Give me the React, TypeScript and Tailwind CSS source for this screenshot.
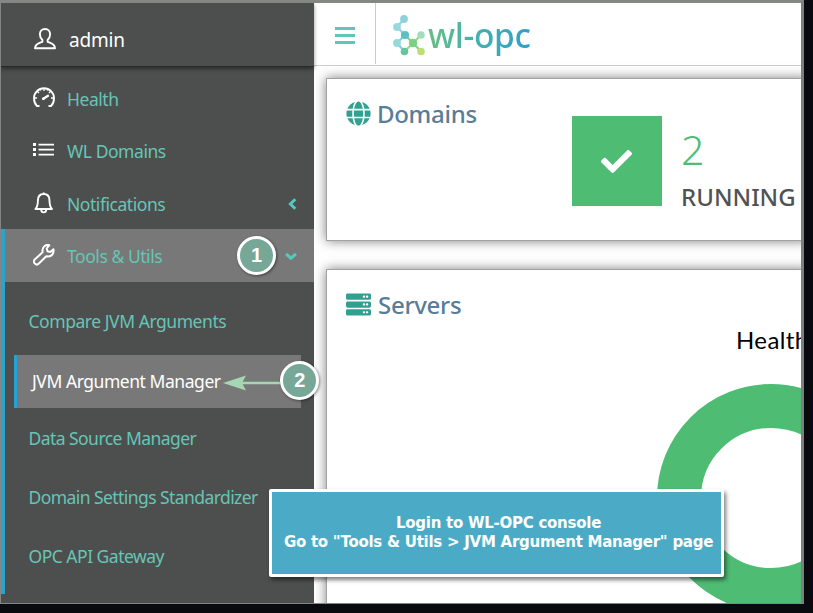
import type { ReactNode } from "react";
import { FaCheck, FaGlobe, FaServer } from "react-icons/fa";

const UserIcon = () => (
  <svg width="22" height="22" viewBox="0 0 22 22" fill="none" stroke="#fff" strokeWidth="1.900" strokeLinejoin="round">
    <path d="M11 1C8 1 5.900 3.100 5.900 6.200C5.900 9 7 10.800 8.400 12V13.800C5.500 15 1.200 15.500 1 20.200H21C20.800 15.500 16.500 15 13.600 13.800V12C15 10.800 16.100 9 16.100 6.200C16.100 3.100 14 1 11 1Z" />
  </svg>
);

const GaugeIcon = () => (
  <svg width="22" height="22" viewBox="0 0 22 22" fill="none" stroke="#fff" strokeWidth="1.900">
    <path d="M6.500 19H4C2 17 1 14 1 11.200A10 10 0 0 1 21 11.200C21 14 20 17 18 19H15.500" />
    <path d="M11 1.500V4M4.200 4.200L6 6M17.800 4.200L16 6M1.500 11H4M18 11H20.500M7 2L7.700 3.600M15 2L14.300 3.600" strokeWidth="1.300" />
    <path d="M10 12L15.800 8.300" strokeWidth="2.200" />
    <circle cx="10.300" cy="11.800" r="1.400" fill="#fff" stroke="none" />
  </svg>
);

const ListIcon = () => (
  <svg width="22" height="16" viewBox="0 0 22 16" fill="#fff">
    <path d="M0 1h3v3H0zM0 6h3v3H0zM0 11h3v3H0zM5.500 1.700h15.500v1.700H5.500zM5.500 6.700h15.500v1.700H5.500zM5.500 11.700h15.500v1.700H5.500z" />
  </svg>
);

const BellIcon = () => (
  <svg width="20" height="22" viewBox="0 0 20 22" fill="none" stroke="#fff" strokeWidth="1.900" strokeLinejoin="round">
    <path d="M2.500 17C4.500 14.800 4.900 13 4.900 8.500C4.900 4.500 7 2 10.700 2C14.400 2 16.500 4.500 16.500 8.500C16.500 13 16.900 14.800 18.900 17Z" />
    <path d="M8.200 17.500C8.200 19.400 9.200 20.400 10.700 20.400C12.200 20.400 13.200 19.400 13.200 17.500M10.700 0.500V2" />
  </svg>
);

const WrenchIcon = () => (
  <svg width="22" height="22" viewBox="0 0 22 22" fill="none" stroke="#fff" strokeWidth="2" strokeLinejoin="round">
    <path d="M16.300 1.200C13 0.300 9.600 2.500 9.500 6L9.600 8.300L1.700 15.500C0.700 16.500 0.700 18.200 1.700 19.400C2.900 20.700 4.500 20.800 5.600 19.800L13.300 12.300L15.300 12.500C18.700 12.400 21.200 9.200 20.500 5.200L17.300 8L14.500 7.300L13.700 4.500Z" />
  </svg>
);

const ChevronLeft = ({ className }: { className: string }) => (
  <svg className={className} width="9" height="12" viewBox="0 0 9 12" fill="none" stroke="#55c9be" strokeWidth="3">
    <path d="M7.300 1.200L2.400 6L7.300 10.800" />
  </svg>
);

const ChevronDown = ({ className }: { className: string }) => (
  <svg className={className} width="12" height="9" viewBox="0 0 12 9" fill="none" stroke="#55c9be" strokeWidth="3">
    <path d="M1.100 1.800L6 6.300L10.900 1.800" />
  </svg>
);

const LogoMark = () => (
  <svg width="34" height="42" viewBox="0 0 34 42">
    <g strokeWidth="2.300" fill="none">
      <path d="M12 4L5 12L13 20" stroke="#92d3dc" />
      <path d="M13 20L5 28L12.500 36.500" stroke="#8bcfd5" />
      <path d="M13 20L21 28L29 36.500" stroke="#82d09a" />
      <path d="M12.500 36.500L21 28L29 20" stroke="#9cdc72" />
    </g>
    <circle cx="12" cy="4" r="3.900" fill="#8fd0dd" />
    <circle cx="5" cy="12" r="3.900" fill="#9ad8e0" />
    <circle cx="13" cy="20" r="4.100" fill="#5dbfc0" />
    <circle cx="5" cy="28" r="3.900" fill="#95d9da" />
    <circle cx="12.500" cy="36.500" r="3.800" fill="#66c4a1" />
    <circle cx="21" cy="28" r="4.200" fill="#7bd083" />
    <circle cx="29" cy="20" r="3.800" fill="#a3ddbb" />
    <circle cx="29" cy="36.500" r="3.800" fill="#bddf76" />
  </svg>
);

function NavRow({ icon, label, className, children }: { icon: ReactNode; label: string; className: string; children?: ReactNode }) {
  return (
    <div className={`flex shrink-0 items-center ${className}`}>
      <span className="-mt-[3px] flex w-[34px] shrink-0">{icon}</span>
      <span className="text-[17.5px] tracking-[-0.45px] whitespace-nowrap text-[#66c5b6]">{label}</span>
      {children}
    </div>
  );
}

const Badge = ({ n, className }: { n: number; className: string }) => (
  <div className={`flex size-[39px] items-center justify-center rounded-full border-[3px] border-white bg-[#76a797] pb-[2px] font-['Liberation_Sans',sans-serif] text-[20px] leading-none font-bold text-white shadow-[1px_1px_3px_rgba(0,0,0,0.45)] ${className}`}>
    {n}
  </div>
);

function Sidebar() {
  return (
    <aside className="flex w-[313px] shrink-0 flex-col bg-[#4d4f4e]">
      <div className="relative flex h-[64px] shrink-0 items-center border-b border-[#292b2a] pt-[11px] pl-[33px] shadow-[0_2px_4px_rgba(0,0,0,0.45)]">
        <span className="-mt-[2px]"><UserIcon /></span>
        <span className="ml-[13px] text-[19px] tracking-[-0.2px] text-white">admin</span>
      </div>
      <NavRow className="mt-[6px] h-[52px] pl-[32px]" icon={<GaugeIcon />} label="Health" />
      <NavRow className="h-[52px] pl-[32px]" icon={<ListIcon />} label="WL Domains" />
      <NavRow className="h-[52px] pt-[3px] pl-[32px]" icon={<BellIcon />} label="Notifications">
        <ChevronLeft className="mr-[17px] mb-px ml-auto" />
      </NavRow>
      <div className="flex h-[365px] shrink-0 flex-col border-l-4 border-[#2ba3cb]">
        <NavRow className="h-[53px] bg-[#787878] pt-[2px] pl-[28px]" icon={<WrenchIcon />} label="Tools & Utils">
          <Badge n={1} className="-mt-[2px] ml-auto" />
          <ChevronDown className="mr-[17px] ml-[9px]" />
        </NavRow>
        <nav className="flex flex-col text-[17.5px] tracking-[-0.45px] whitespace-nowrap text-[#66c5b6]">
          <span className="mt-[13px] flex h-[52px] items-center pl-[23.500px]">Compare JVM Arguments</span>
          <div className="mt-[8px] ml-[9px] flex h-[53px] w-[287px] items-center border-l-[3px] border-[#23a3d4] bg-[#787878] pl-[15px] text-white">
            <span>JVM Argument Manager</span>
            <svg className="relative mt-[2px] ml-auto shrink-0" width="58" height="18" viewBox="0 0 58 18">
              <path d="M18 9H58" stroke="#a5d7b5" strokeWidth="2.500" />
              <path d="M1 9L24 1.500L20 9L24 16.500Z" fill="#a5d7b5" />
            </svg>
            <Badge n={2} className="relative z-10 -mr-[18px] mb-[2px] shrink-0" />
          </div>
          <span className="mt-[4px] flex h-[52px] items-center pl-[23.500px] tracking-[-0.55px]">Data Source Manager</span>
          <span className="mt-[7px] flex h-[52px] items-center pl-[23.500px] tracking-[-0.57px]">Domain Settings Standardizer</span>
          <span className="mt-[7px] flex h-[52px] items-center pl-[23.500px] tracking-[-0.5px]">OPC API Gateway</span>
        </nav>
      </div>
    </aside>
  );
}

function Main() {
  return (
    <main className="flex min-w-0 flex-1 flex-col overflow-hidden bg-white">
      <header className="flex h-[63px] shrink-0 border-b border-[#ccc]">
        <div className="flex h-[61px] w-[62px] shrink-0 flex-col justify-center gap-[4px] border-r border-[#ccc] pt-[4px] pl-[21px]">
          <i className="block h-[3px] w-[20px] bg-[#62c4ba]" />
          <i className="block h-[3px] w-[20px] bg-[#62c4ba]" />
          <i className="block h-[3px] w-[20px] bg-[#62c4ba]" />
        </div>
        <div className="flex pt-[12px] pl-[16px]">
          <LogoMark />
          <span className="ml-[2px] h-[44px] bg-linear-to-r from-[#65bf82] via-[#42afb0] to-[#339dcb] bg-clip-text text-[33.5px] leading-[40px] font-medium tracking-[-0.3px] text-transparent">wl-opc</span>
        </div>
      </header>
      <section className="mt-[12px] -mr-2 ml-[12px] flex h-[163px] shrink-0 border border-[#a2a2a2] bg-white shadow-[0_0_11px_rgba(0,0,0,0.5)]">
        <div className="flex w-[245px] shrink-0 items-start pt-[17px] pl-[19px]">
          <FaGlobe className="mt-[5px] size-[25px] text-[#32a091]" />
          <h2 className="ml-[6px] text-[24px] leading-[36px] font-medium tracking-[-0.3px] text-[#587c99]">Domains</h2>
        </div>
        <div className="mt-[37px] flex size-[90px] shrink-0 items-center justify-center bg-[#4fbc74] pr-[2px]">
          <FaCheck className="size-[31px] text-white" />
        </div>
        <div className="mt-[42px] ml-[19px] whitespace-nowrap">
          <div className="text-[41px] leading-[56px] font-[350] text-[#4fbc74]">2</div>
          <div className="mt-[2px] text-[24px] leading-[36px] font-medium text-[#505254]">RUNNING</div>
        </div>
      </section>
      <section className="mt-[28px] -mr-2 ml-[12px] h-[400px] shrink-0 border border-[#a2a2a2] bg-white shadow-[0_0_11px_rgba(0,0,0,0.5)]">
        <div className="flex h-[53px] items-start pt-[17px] pl-[19px]">
          <FaServer className="mt-[5px] size-[25px] text-[#32a091]" />
          <h2 className="ml-[7px] text-[24px] leading-[36px] font-medium tracking-[-0.3px] text-[#587c99]">Servers</h2>
        </div>
        <div className="-mt-px ml-[409px] font-['Lato',sans-serif] text-[24px] leading-[36px] tracking-[0.4px] text-black">Health</div>
        <div className="mt-[26px] ml-[330px] size-[228px] rounded-full border-[44px] border-[#4fbc74]" />
      </section>
    </main>
  );
}

export default function App() {
  return (
    <div className="relative h-[613px] w-[813px] overflow-hidden bg-[#080a10] font-['Noto_Sans',sans-serif]">
      <div className="flex h-[604px] w-[804px] overflow-hidden border-t-[3px] border-r-[3px] border-b border-l border-t-[#858785] border-r-[#7e7e7e] border-b-[#858585] border-l-[#858585]">
        <Sidebar />
        <Main />
      </div>
      <div className="absolute top-[489px] left-[269px] z-20 flex h-[88px] w-[455px] flex-col items-center justify-center rounded-[2px] border-[3px] border-white bg-[#4babc7] pb-[1px] pl-[4px] font-['DejaVu_Sans',sans-serif] text-[15px] leading-[19px] font-bold tracking-[-0.26px] whitespace-nowrap text-white shadow-[2px_3px_4px_rgba(0,0,0,0.5)]">
        <div>Login to WL-OPC console</div>
        <div>Go to "Tools &amp; Utils &gt; JVM Argument Manager" page</div>
      </div>
    </div>
  );
}
